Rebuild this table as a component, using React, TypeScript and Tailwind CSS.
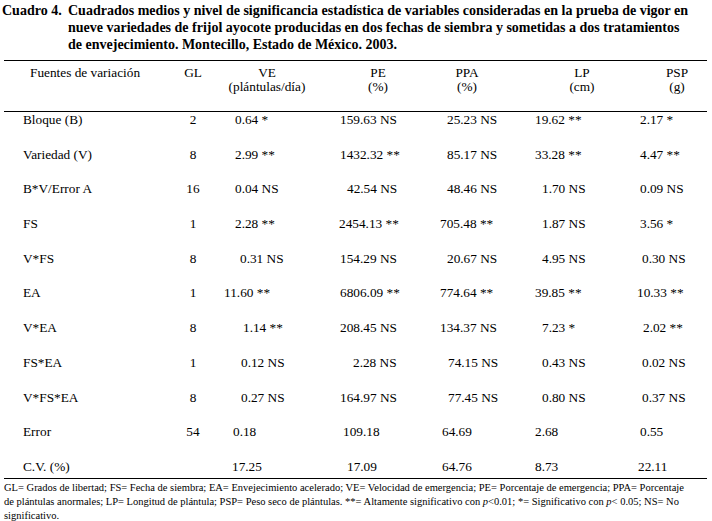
type Cell = [string, string];
type Row = { name: string; gl: string; cells: Cell[] };

// left offsets are measured from the scan; the source table used tab stops
const rows: Row[] = [
  { name: "Bloque (B)", gl: "2", cells: [["0.64 *", "pl-[19px]"], ["159.63 NS", "pl-[40px]"], ["25.23 NS", "pl-[37px]"], ["19.62 **", "pl-[25px]"], ["2.17 *", "pl-[30px]"]] },
  { name: "Variedad (V)", gl: "8", cells: [["2.99 **", "pl-[19px]"], ["1432.32 **", "pl-[40px]"], ["85.17 NS", "pl-[37px]"], ["33.28 **", "pl-[25px]"], ["4.47 **", "pl-[30px]"]] },
  { name: "B*V/Error A", gl: "16", cells: [["0.04 NS", "pl-[19px]"], ["42.54 NS", "pl-[47px]"], ["48.46 NS", "pl-[37px]"], ["1.70 NS", "pl-[32px]"], ["0.09 NS", "pl-[30px]"]] },
  { name: "FS", gl: "1", cells: [["2.28 **", "pl-[19px]"], ["2454.13 **", "pl-[39px]"], ["705.48 **", "pl-[30px]"], ["1.87 NS", "pl-[32px]"], ["3.56 *", "pl-[30px]"]] },
  { name: "V*FS", gl: "8", cells: [["0.31 NS", "pl-[24px]"], ["154.29 NS", "pl-[40px]"], ["20.67 NS", "pl-[37px]"], ["4.95 NS", "pl-[32px]"], ["0.30 NS", "pl-[32px]"]] },
  { name: "EA", gl: "1", cells: [["11.60 **", "pl-[8px]"], ["6806.09 **", "pl-[40px]"], ["774.64 **", "pl-[30px]"], ["39.85 **", "pl-[25px]"], ["10.33 **", "pl-[27px]"]] },
  { name: "V*EA", gl: "8", cells: [["1.14 **", "pl-[27px]"], ["208.45 NS", "pl-[40px]"], ["134.37 NS", "pl-[30px]"], ["7.23 *", "pl-[32px]"], ["2.02 **", "pl-[33px]"]] },
  { name: "FS*EA", gl: "1", cells: [["0.12 NS", "pl-[25px]"], ["2.28 NS", "pl-[53px]"], ["74.15 NS", "pl-[38px]"], ["0.43 NS", "pl-[32px]"], ["0.02 NS", "pl-[32px]"]] },
  { name: "V*FS*EA", gl: "8", cells: [["0.27 NS", "pl-[25px]"], ["164.97 NS", "pl-[40px]"], ["77.45 NS", "pl-[38px]"], ["0.80 NS", "pl-[32px]"], ["0.37 NS", "pl-[32px]"]] },
  { name: "Error", gl: "54", cells: [["0.18", "pl-[17px]"], ["109.18", "pl-[43px]"], ["64.69", "pl-[32px]"], ["2.68", "pl-[25px]"], ["0.55", "pl-[30px]"]] },
  { name: "C.V. (%)", gl: "", cells: [["17.25", "pl-[16px]"], ["17.09", "pl-[47px]"], ["64.76", "pl-[32px]"], ["8.73", "pl-[25px]"], ["22.11", "pl-[28px]"]] },
];

const colWidths = ["w-[84px]", "w-[110px]", "w-[100px]", "w-[100px]", "w-[97px]"];

const headers: [string, string, string][] = [
  ["VE", "(plántulas/día)", "w-[102px]"],
  ["PE", "(%)", "w-[120px]"],
  ["PPA", "(%)", "w-[58px]"],
  ["LP", "(cm)", "w-[172px]"],
  ["PSP", "(g)", "w-[18px]"],
];

export default function App() {
  return (
    <div className="w-[712px] h-[521px] bg-white text-black font-['Liberation_Serif',serif] overflow-hidden">
      {/* Caption */}
      <div className="flex pt-[2px] text-[14px] leading-[17px] font-bold whitespace-nowrap">
        <div className="w-[68px] pl-[2px] shrink-0">Cuadro 4.</div>
        <div>
          <div>Cuadrados medios y nivel de significancia estadística de variables consideradas en la prueba de vigor en</div>
          <div>nueve variedades de frijol ayocote producidas en dos fechas de siembra y sometidas a dos tratamientos</div>
          <div>de envejecimiento. Montecillo, Estado de México. 2003.</div>
        </div>
      </div>

      <div className="ml-[4px] w-[703px] mt-[7px]">
        {/* Header */}
        <div className="h-[52px] border-y border-black pt-[5px] flex text-[13.3px] leading-[14px] whitespace-nowrap">
          <div className="w-[166px] pl-[26px]">Fuentes de variación</div>
          <div className="w-[46px] flex justify-center">GL</div>
          {headers.map(([a, b, w]) => (
            <div key={a} className={`${w} flex flex-col items-center`}>
              <span>{a}</span>
              <span>{b}</span>
            </div>
          ))}
        </div>

        {/* Body */}
        <div className="text-[13.3px] leading-[15px] whitespace-nowrap">
          {rows.map((r, i) => (
            <div
              key={r.name}
              className={i === rows.length - 1 ? "h-[20px] flex border-b border-black" : "h-[34.7px] flex"}
            >
              <div className="w-[166px] pl-[19px]">{r.name}</div>
              <div className="w-[46px] text-center">{r.gl}</div>
              {r.cells.map(([t, pl], j) => (
                <div key={j} className={`${colWidths[j]} ${pl}`}>
                  {t}
                </div>
              ))}
            </div>
          ))}
        </div>

        {/* Notes */}
        <div className="pt-[2px] text-[10.5px] leading-[14px] whitespace-nowrap">
          <div>GL= Grados de libertad; FS= Fecha de siembra; EA= Envejecimiento acelerado; VE= Velocidad de emergencia; PE= Porcentaje de emergencia; PPA= Porcentaje</div>
          <div>
            de plántulas anormales; LP= Longitud de plántula; PSP= Peso seco de plántulas. **= Altamente significativo con <i>p</i>&lt;0.01; *= Significativo con <i>p</i>&lt; 0.05; NS= No
          </div>
          <div>significativo.</div>
        </div>
      </div>
    </div>
  );
}
